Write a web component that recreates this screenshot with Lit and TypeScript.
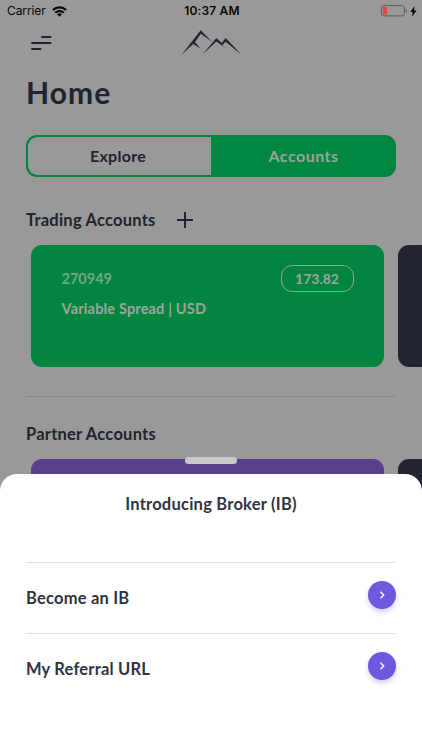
import { LitElement, html, css } from "lit";
import { customElement } from "lit/decorators.js";

@customElement("status-bar")
class StatusBar extends LitElement {
  static styles = css`
    :host {
      display: grid;
      grid-template-columns: 1fr auto 1fr;
      align-items: center;
      height: 22px;
      padding: 0 5px 0 7px;
      font: 400 12px/22px Inter, "Liberation Sans", sans-serif;
      color: #080808;
    }
    .left { display: flex; align-items: center; gap: 6px; }
    .carrier { letter-spacing: -0.1px; }
    .time { font-weight: 600; letter-spacing: 0.15px; }
    .right { display: flex; justify-content: flex-end; align-items: center; gap: 3px; }
    svg { display: block; }
  `;
  render() {
    return html`
      <div class="left">
        <span class="carrier">Carrier</span>
        <svg width="15" height="11" viewBox="0 0 15 11">
          <g fill="none" stroke="#080808" stroke-width="2.2">
            <path d="M.9 4.100a9.300 9.300 0 0 1 13.200 0" />
            <path d="M3.300 6.800a5.900 5.900 0 0 1 8.400 0" />
          </g>
          <path d="M7.500 10.800 5.100 8.400a3.400 3.400 0 0 1 4.800 0z" fill="#080808" />
        </svg>
      </div>
      <span class="time">10:37 AM</span>
      <div class="right">
        <svg width="27" height="12" viewBox="0 0 27 12">
          <rect x="1.4" y=".6" width="23" height="10.3" rx="2.5" fill="none" stroke="#5c5c5c" />
          <rect x="2.9" y="2" width="4.2" height="7.5" rx="1" fill="#ee4238" />
          <path d="M25.6 4v3.8q1.2-.4 1.200-1.900t-1.200-1.900z" fill="#5c5c5c" />
        </svg>
        <svg width="7" height="11" viewBox="0 0 7 11">
          <path d="M4.600 0 .3 6h2.500L2 10.700 6.600 4.500H4z" fill="#080808" />
        </svg>
      </div>
    `;
  }
}

@customElement("sheet-row")
class SheetRow extends LitElement {
  static styles = css`
    :host {
      display: flex;
      justify-content: space-between;
      align-items: flex-start;
      height: 71px;
      border-top: 1px solid #e2e2e4;
      box-sizing: border-box;
    }
    .label { margin-top: 23px; font-size: 16.5px; line-height: 24px; letter-spacing: 0.2px; white-space: nowrap; }
    .go {
      display: flex;
      align-items: center;
      justify-content: center;
      width: 28px;
      height: 28px;
      margin: 18px 0.5px 0 0;
      border-radius: 50%;
      background: #6f58de;
      box-shadow: 0 3px 5px rgba(111, 88, 222, 0.3);
    }
  `;
  render() {
    return html`
      <span class="label"><slot></slot></span>
      <span class="go">
        <svg width="8" height="10" viewBox="0 0 8 10">
          <path d="M2.500 1.800 5.700 5 2.500 8.200" fill="none" stroke="#fff" stroke-width="1.4" />
        </svg>
      </span>
    `;
  }
}

@customElement("app-root")
class AppRoot extends LitElement {
  static styles = css`
    :host {
      display: block;
      position: relative;
      width: 422px;
      height: 750px;
      overflow: hidden;
      background: #999;
      color: #20242e;
      font-family: Lato, "Open Sans", sans-serif;
      font-weight: 700;
    }
    * { box-sizing: border-box; }
    svg { display: block; }
    .header {
      display: grid;
      grid-template-columns: 1fr auto 1fr;
      height: 40px;
      padding: 0 26px;
    }
    .menu { margin: 13px 0 0 5px; }
    .logo { margin-top: 7px; }
    h1, h2, p { margin: 0; font-weight: inherit; white-space: nowrap; }
    h1 { margin: 10px 26px 0; font-size: 30px; line-height: 40px; letter-spacing: 1.1px; }
    .tabs {
      display: grid;
      grid-template-columns: 1fr 1fr;
      height: 42px;
      margin: 23.4px 26px 0;
      border: 2px solid #018740;
      border-radius: 11px;
      background: #018740;
      overflow: hidden;
      font-size: 16px;
      line-height: 38px;
      text-align: center;
    }
    .tab { letter-spacing: 0.3px; padding-right: 3px; }
    .tab.plain { background: #999; border-radius: 9px 0 0 9px; }
    .tab.active { color: #9aa49d; letter-spacing: 0.5px; padding: 0 0 0 2px; }
    .section { display: flex; align-items: center; height: 24px; margin: 31px 26px 0; }
    h2 { font-size: 16.5px; line-height: 24px; letter-spacing: 0.23px; }
    .plus { margin-left: 21px; }
    .cards { display: flex; gap: 14px; margin: 13px 0 0 31px; }
    .card { flex: 0 0 353px; height: 122px; border-radius: 11px; }
    .green { background: #01853f; color: #9ba69d; padding: 20px 30.5px; }
    .purple { background: #5a3f8d; }
    .dark { background: #22252f; }
    .top { display: flex; justify-content: space-between; align-items: center; height: 27px; }
    .number { font-size: 14.5px; color: #72a585; }
    .balance {
      width: 73px;
      height: 27px;
      border: 1px solid #8aa792;
      border-radius: 11px;
      font-size: 14px;
      line-height: 25px;
      text-align: center;
    }
    .kind { margin-top: 6px; font-size: 14.5px; line-height: 22px; letter-spacing: 0.17px; }
    .rule { height: 1px; margin: 29px 26px 0; background: #898687; }
    .partner { margin-top: 24.2px; }
    .handle {
      position: absolute;
      left: 185px;
      top: 457px;
      width: 52px;
      height: 7px;
      border-radius: 3.5px;
      background: #c9c7d0;
    }
    .sheet {
      position: absolute;
      inset: 474px 0 0;
      padding: 18px 26px 0;
      border-radius: 17px 17px 0 0;
      background: #fff;
      color: #303442;
    }
    .title { height: 70px; font-size: 16.5px; line-height: 25px; text-align: center; }
  `;

  render() {
    return html`
      <status-bar></status-bar>
      <div class="header">
        <svg class="menu" width="21" height="16" viewBox="0 0 21 16">
          <path d="M11 2h8.500M1 8h18.500M1 14h8.500" stroke="#20242e" stroke-width="2" stroke-linecap="round" />
        </svg>
        <svg class="logo" width="61" height="27" viewBox="0 0 61 27">
          <g fill="#20242e">
            <path d="M.8 25.600 19.700 1.200 31 12.800 19.800 4.800 14 13 19.300 19.500 12.200 15z" />
            <path d="M21.500 25.600 35.400 8.900 40.700 14 44.700 8.900 60.300 25.500 44.600 12.800 41.200 16.300 47 20.700 35.300 12.600z" />
          </g>
        </svg>
      </div>
      <h1>Home</h1>
      <div class="tabs">
        <div class="tab plain">Explore</div>
        <div class="tab active">Accounts</div>
      </div>
      <div class="section">
        <h2>Trading Accounts</h2>
        <svg class="plus" width="16" height="16" viewBox="0 0 16 16">
          <path d="M8 0v16M0 8h16" stroke="#20242e" stroke-width="2" />
        </svg>
      </div>
      <div class="cards">
        <div class="card green">
          <div class="top">
            <span class="number">270949</span>
            <span class="balance">173.82</span>
          </div>
          <p class="kind">Variable Spread | USD</p>
        </div>
        <div class="card dark"></div>
      </div>
      <div class="rule"></div>
      <div class="section partner"><h2>Partner Accounts</h2></div>
      <div class="cards">
        <div class="card purple"></div>
        <div class="card dark"></div>
      </div>
      <div class="handle"></div>
      <div class="sheet">
        <h2 class="title">Introducing Broker (IB)</h2>
        <sheet-row>Become an IB</sheet-row>
        <sheet-row>My Referral URL</sheet-row>
      </div>
    `;
  }
}
